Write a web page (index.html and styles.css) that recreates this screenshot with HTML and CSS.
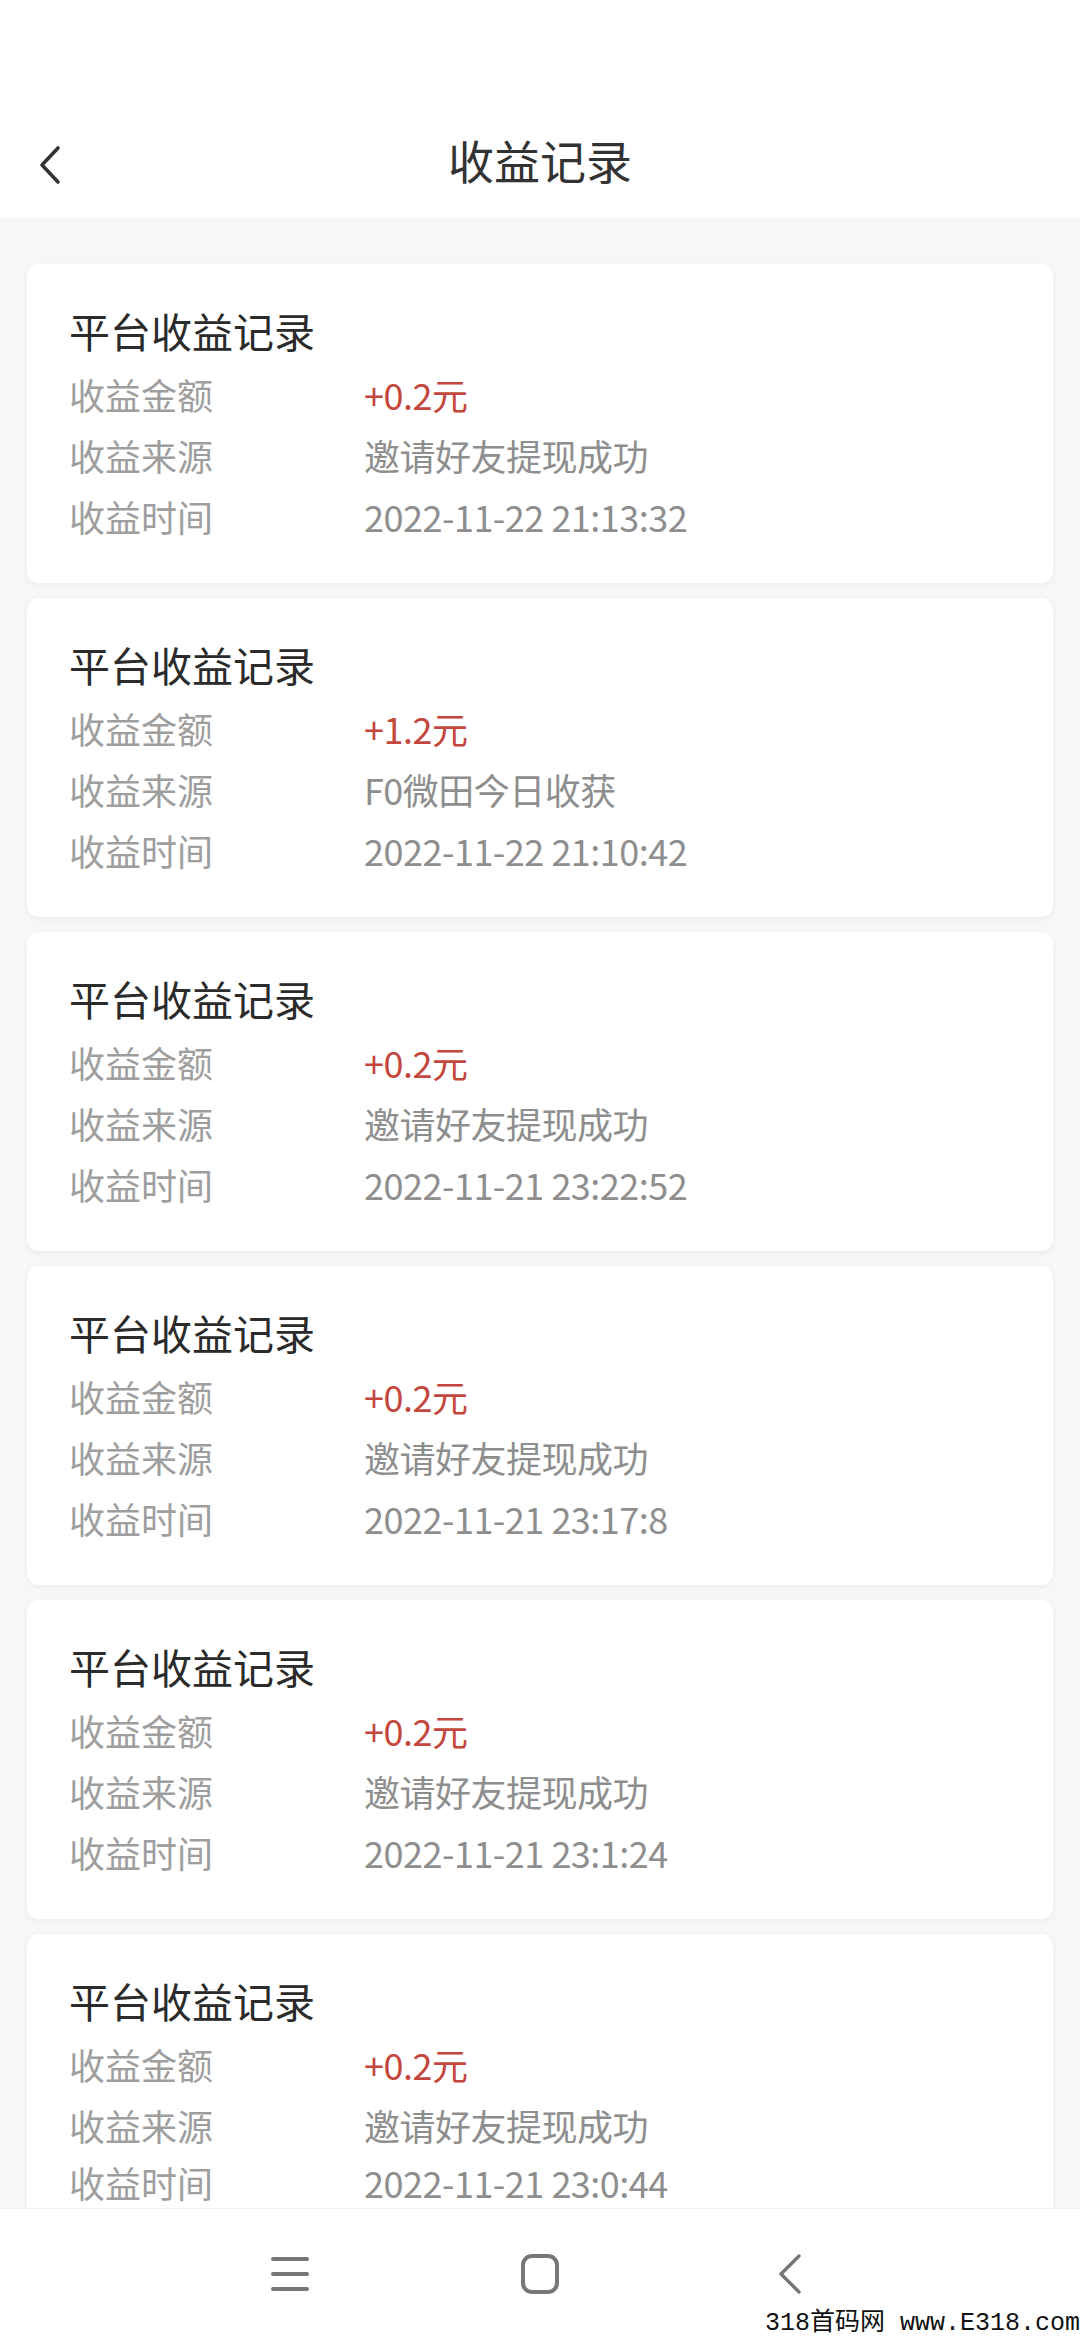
FILE: index.html
```html
<!DOCTYPE html>
<html lang="zh-CN">
<head>
    <meta charset="UTF-8">
    <meta name="viewport" content="width=device-width, initial-scale=1.0">
    <title>收益记录</title>
    <link rel="stylesheet" href="styles.css">
</head>
<body>
    <div class="top-bar">
        <svg class="back-icon" width="30" height="40" viewBox="0 0 30 40">
            <polyline points="24,3 8,20 24,37" fill="none" stroke="#333" stroke-width="3.6" stroke-linecap="round" stroke-linejoin="round"/>
        </svg>
        <h1 class="page-title">收益记录</h1>
    </div>

    <div class="record-list">
        <div class="record-card">
            <div class="record-title">平台收益记录</div>
            <div class="record-row"><span class="row-label">收益金额</span><span class="row-value amount">+0.2元</span></div>
            <div class="record-row"><span class="row-label">收益来源</span><span class="row-value">邀请好友提现成功</span></div>
            <div class="record-row"><span class="row-label">收益时间</span><span class="row-value">2022-11-22 21:13:32</span></div>
        </div>
        <div class="record-card">
            <div class="record-title">平台收益记录</div>
            <div class="record-row"><span class="row-label">收益金额</span><span class="row-value amount">+1.2元</span></div>
            <div class="record-row"><span class="row-label">收益来源</span><span class="row-value">F0微田今日收获</span></div>
            <div class="record-row"><span class="row-label">收益时间</span><span class="row-value">2022-11-22 21:10:42</span></div>
        </div>
        <div class="record-card">
            <div class="record-title">平台收益记录</div>
            <div class="record-row"><span class="row-label">收益金额</span><span class="row-value amount">+0.2元</span></div>
            <div class="record-row"><span class="row-label">收益来源</span><span class="row-value">邀请好友提现成功</span></div>
            <div class="record-row"><span class="row-label">收益时间</span><span class="row-value">2022-11-21 23:22:52</span></div>
        </div>
        <div class="record-card">
            <div class="record-title">平台收益记录</div>
            <div class="record-row"><span class="row-label">收益金额</span><span class="row-value amount">+0.2元</span></div>
            <div class="record-row"><span class="row-label">收益来源</span><span class="row-value">邀请好友提现成功</span></div>
            <div class="record-row"><span class="row-label">收益时间</span><span class="row-value">2022-11-21 23:17:8</span></div>
        </div>
        <div class="record-card">
            <div class="record-title">平台收益记录</div>
            <div class="record-row"><span class="row-label">收益金额</span><span class="row-value amount">+0.2元</span></div>
            <div class="record-row"><span class="row-label">收益来源</span><span class="row-value">邀请好友提现成功</span></div>
            <div class="record-row"><span class="row-label">收益时间</span><span class="row-value">2022-11-21 23:1:24</span></div>
        </div>
        <div class="record-card">
            <div class="record-title">平台收益记录</div>
            <div class="record-row"><span class="row-label">收益金额</span><span class="row-value amount">+0.2元</span></div>
            <div class="record-row"><span class="row-label">收益来源</span><span class="row-value">邀请好友提现成功</span></div>
            <div class="record-row last-row"><span class="row-label">收益时间</span><span class="row-value">2022-11-21 23:0:44</span></div>
        </div>
    </div>

    <div class="nav-bar">
        <svg class="nav-icon" width="40" height="40" viewBox="0 0 40 40">
            <g stroke="#777" stroke-width="4" stroke-linecap="round">
                <line x1="3" y1="5" x2="37" y2="5"/>
                <line x1="3" y1="20" x2="37" y2="20"/>
                <line x1="3" y1="35" x2="37" y2="35"/>
            </g>
        </svg>
        <svg class="nav-icon" width="40" height="40" viewBox="0 0 40 40">
            <rect x="3" y="2" width="34" height="36" rx="9" fill="none" stroke="#777" stroke-width="4"/>
        </svg>
        <svg class="nav-icon" width="40" height="40" viewBox="0 0 40 40">
            <polyline points="29,2 11,20 29,38" fill="none" stroke="#777" stroke-width="3.4" stroke-linecap="round" stroke-linejoin="round"/>
        </svg>
        <div class="watermark">318首码网 www.E318.com</div>
    </div>
</body>
</html>
```

FILE: styles.css
```css
body {
    margin: 0;
    width: 1080px;
    height: 2340px;
    overflow: hidden;
    display: flex;
    flex-direction: column;
    background: #f7f7f7;
    font-family: 'Noto Sans CJK SC', 'Noto Sans', sans-serif;
}
.top-bar {
    position: relative;
    flex-shrink: 0;
    height: 118px;
    padding-top: 100px;
    background: #fff;
    display: flex;
    align-items: center;
    justify-content: center;
}
.back-icon {
    position: absolute;
    left: 34px;
    top: 145px;
}
.page-title {
    margin: 0;
    font-size: 46px;
    font-weight: 400;
    color: #333;
    line-height: 60px;
}
.record-list {
    flex: 1;
    overflow: hidden;
    padding: 46px 27px 0;
    display: flex;
    flex-direction: column;
    gap: 15px;
}
.record-card {
    flex-shrink: 0;
    background: #fff;
    border-radius: 12px;
    box-shadow: 0 2px 6px rgba(0, 0, 0, 0.05);
    padding: 32px 42px 36px;
}
.record-title {
    font-size: 41px;
    line-height: 68px;
    color: #2b2b2b;
}
.record-row {
    display: flex;
    font-size: 36px;
    line-height: 61px;
}
.last-row {
    line-height: 52px;
    padding-bottom: 9px;
}
.row-label {
    width: 295px;
    flex-shrink: 0;
    color: #9e9e9e;
}
.row-value {
    color: #8e8e8e;
    letter-spacing: -0.5px;
}
.row-value.amount {
    color: #c4473d;
}
.nav-bar {
    position: relative;
    flex-shrink: 0;
    height: 132px;
    background: #fff;
    border-top: 1px solid #f0f0f0;
    box-sizing: border-box;
    display: flex;
    align-items: center;
    justify-content: center;
    gap: 210px;
    padding-bottom: 2px;
}
.nav-icon {
    display: block;
}
.watermark {
    position: absolute;
    right: 0;
    bottom: 0;
    font-family: 'Liberation Mono', 'Noto Sans CJK SC', monospace;
    font-size: 25px;
    line-height: 32px;
    color: #111;
}
```
